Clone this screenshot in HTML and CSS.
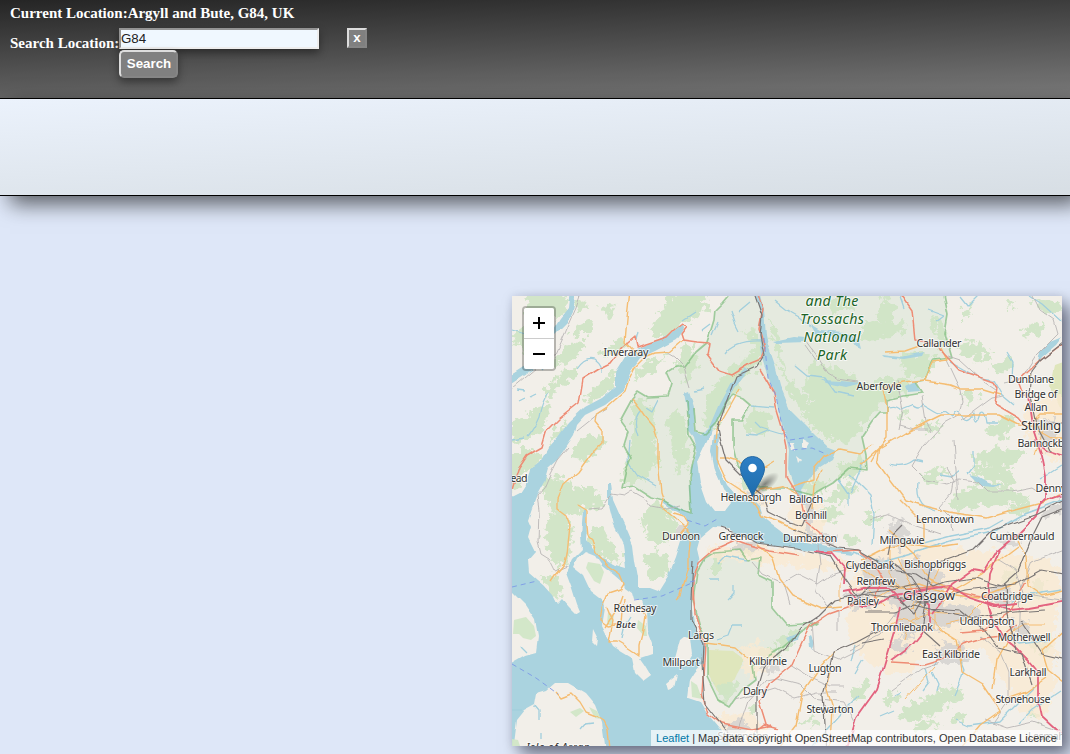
FILE: index.html
```html
<!DOCTYPE html>
<html lang="en">
<head>
<meta charset="utf-8">
<title>Location search</title>
<link rel="stylesheet" href="styles.css">
</head>
<body>
<header class="topbar">
  <div class="current">Current Location:Argyll and Bute, G84, UK</div>
  <form class="search">
    <label class="search-label" for="q">Search Location:</label>
    <div class="search-fields">
      <input class="search-input" id="q" type="text" value="G84">
      <button class="search-button" type="button">Search</button>
    </div>
    <button class="close-button" type="button">x</button>
  </form>
</header>
<section class="panel"></section>
<main class="content">
<div class="map">
<svg class="tiles" viewBox="512 296 550 450" width="550" height="450">
<defs>
  <filter id="rough" filterUnits="userSpaceOnUse" x="500" y="286" width="574" height="470"><feTurbulence type="fractalNoise" baseFrequency=".14" numOctaves="3" seed="4"/><feDisplacementMap in="SourceGraphic" scale="18" xChannelSelector="R" yChannelSelector="G"/></filter>
  <filter id="wobble" filterUnits="userSpaceOnUse" x="500" y="286" width="574" height="470"><feTurbulence type="fractalNoise" baseFrequency=".07" numOctaves="1" seed="9"/><feDisplacementMap in="SourceGraphic" scale="6" xChannelSelector="R" yChannelSelector="G"/></filter>
  <radialGradient id="pin"><stop offset="0" stop-color="#000" stop-opacity=".45"/><stop offset="1" stop-color="#000" stop-opacity="0"/></radialGradient>
  <linearGradient id="blue" x2="0" y2="1"><stop offset="0" stop-color="#2e7fc6"/><stop offset="1" stop-color="#1f6dab"/></linearGradient>
</defs>
<rect class="land" x="512" y="296" width="550" height="450"/>

<!-- national and regional parks -->
<g class="park" filter="url(#wobble)">
  <path d="M733 290L722 303 715 310 714 320 710 333 707 342 698 346 695 352 684 367 675 367 667 372 672 383 668 397 648 398 638 392 632 399 620 421 628 432 624 445 631 458 626 470 622 488 635 486 652 497 663 500 674 507 691 513 689 490 688 478 692 462 698 448 715 428 726 402 733 395 743 399 750 405 741 420 733 420 733 448 737 465 760 488 785 488 812 495 833 483 850 468 867 470 866 455 862 437 872 422 880 413 887 413 887 400 903 396 922 393 915 382 925 380 933 360 952 358 945 333 948 315 943 290Z"/>
  <path d="M715 552L740 550 747 560 760 558 758 575 772 582 772 607 787 625 817 623 800 633 782 648 770 655 753 667 755 680 742 690 730 707 718 700 707 677 707 640 700 627 693 600 697 572 705 558Z"/>
  <path class="moor" d="M708 650l25 1 12 9-8 14-9 20-9-1-12-20z"/>
  <path class="moor" d="M1068 360l-14 5-4 20 12 26h6z"/>
</g>

<!-- woodland -->
<g class="wood" filter="url(#rough)">
  <path d="M530 292h32l8 14-14 16-22 4-10-16zM508 340l22-20 12 4-20 22zM577 325l14-6 6 8-16 10-10-2zM578 300l10 2-4 10-10 0zM650 330l22-38 32-2 4 18-30 22-22 10zM598 352l24-14 4 8-20 14zM566 345l20-4-8 16-20 10-8-4zM545 388l20-20 14-2-12 18-22 16zM508 425l24-14 22-8-12 26-28 16zM588 394l20-18 12-10-6 20-22 16-10-2zM632 372l18-12 16-4-10 16-20 8zM508 450h26l8 8-8 10-10 4-4 14-12 6zM556 428l10-8-6 16-12 12zM580 440l18-6 10 8-12 12-10 6-16-2z"/>
  <path d="M540 480l22-4 14 10 14 14-12 16-24-4-10-16zM548 512l20 2 4 20-4 24-8 12-12-20-4-18zM582 488l10 0 14 12-4 10-20-4zM588 528l12-2 14 18 8 20-20-6-14-16zM584 560l12 12 8 18-12-4-8-14zM640 520l16-22 14 14 6 20-18 16-12-14zM644 555l12-6 14 10-6 18-16 6zM640 622l10 8 2 16-8 0zM540 576l18-2 4 14-4 12-10-8zM620 484l16-60 14 2 10 34-20 22z"/>
  <path d="M632 404l12-6 8 14 4 30-12 18-12-20zM668 416l12-6 8 18-2 38-8 10-6-30zM685 338l14 22-12 22-10-14zM706 396l26-32 20-6-14 32-26 40-8-4zM745 330l14 2 4 22-8 20-16-8 14-18zM768 316l12 22 4 30 16 24 14 12 24 2 22 12-6 18-14 8-28-14-20-34-18-48zM812 362l30 6 22 16 22-8 28 6-8 12-24 8-30 38-20-6-10-22-20-24zM882 298l14 6-6 18-14-2zM824 300l22-4 6 14-18 4zM932 318l12 4 6 24-12 2zM862 326l26-6 20 4-16 14-30 2zM900 354l40 2-12 20-22 2zM738 476l14 0 10 12-20 0zM797 480l14-6-2 20-12-4zM742 420l16-12 12 8-4 20-16-4zM836 468l24-10 4 10-18 14zM806 486l22-6-6 14-14 4z"/>
  <path d="M961 312l12-8-4 14-8 2zM956 344l20-2 18 10-12 10-22-8zM990 366l20-10 4 10-16 8zM960 394l12-4 6 8-10 6zM1020 330l22-8 4 8-18 8zM1032 300l26 2 4 8-16 4zM920 420l20 4-2 10-16-2zM900 410l10 4-8 8zM985 430l20-14 14 0-10 16-14 8zM970 455l28-8 24 6-10 14-32-2zM972 468l26-4 16 14-4 10-22-6zM950 500l24-16 34 4 26 10-20 6-30 2-26 6zM922 474l14-6 12 4-18 14zM1006 508l24-8 4 10-18 6zM1030 582l16 0-4 14-10 0zM1030 640l22 4-4 8-14 0zM1000 572l14-4 6 10-16 4zM830 490l24-8 4 8-18 12-16 0zM818 512l16-6 12 8-12 8-20-2zM866 512l16 4-4 8-16 0zM845 538l10-4 2 12-8 2z"/>
  <path d="M898 716l16-14 20-6 14 6-14 12-24 8zM935 694l18-8 10 10-16 12zM954 712l14 2-6 10-12-4zM882 698l12-6 6 6-12 8zM912 724l20-4 8 6-24 6zM1030 706l8 2-4 12-6-4zM852 690l8-6 10-2-6 16-10 2zM800 720l18-4-4 8-14 2zM745 706l14 2-10 8zM715 554l12 4-8 14-12 0zM780 638l20-8-12 20-12 10zM716 682l22 2-8 18-10-4zM760 650l16-10-4 16-14 6zM740 544l16 2-4 10-16 0zM1006 300l10 4-8 8zM520 346l8-6 8 6-10 8zM600 304l16 4-8 8z"/>
</g>

<!-- built-up areas -->
<g class="suburb" filter="url(#rough)">
  <path d="M868 558l24-14 36-2 40 8 40 2 44 10 10 20-6 40 0 60-10 32-20 4-22-34-20-36-60 10-20 20-32-12-26-30 4-54zM706 546l34-4 30 6 50 8 44 8-10 8-70-6-40-8-30 4zM1025 400l43-4v70l-40-20zM730 484l26 6 14 18-16-4zM790 505l30-4 6 40-30 6zM740 650l16-10 20 14-10 18-18 6zM714 716l40-4 12 20-4 14h-34z"/>
</g>
<g class="town" filter="url(#rough)">
  <path d="M862 564l20-8 14 10 2 22-12 10-22-4zM896 566l22-10 16 10 14 18-8 20-22 18-20-2-8-20zM900 604l30-2 26 6 14 12-22 8-26-2-12 14-14-8zM888 524l12-6 8 16-4 18-10-4zM945 604l24-2 14 14-16 10-20-8zM846 594l20-2 4 16-18 4zM990 590l14-4 12 8-10 12-16-4zM1012 620l20 4-4 14-18-4zM934 646l30-4 4 18-24 6zM726 545l26-3 10 8-24 2zM806 532l24 0 8 10-24 2zM803 502l10 0-2 34-6 0zM1036 420l16 0 6 20-14 10zM996 538l20-4 8 8-22 6zM888 644l14-6 10 12-12 6zM722 724l22-4 10 12-20 6zM676 522l12 4-8 16-6-4zM740 488l14 6 6 8-10-4zM765 660l20 2-8 12-12-4zM1040 508l28-8v10l-24 10z"/>
</g>

<!-- sea and lochs -->
<g class="water" filter="url(#wobble)">
  <path d="M506 500L520 493 527 482 530 470 540 462 548 448 558 437 568 423 585 407 602 398 615 387 615 373 625 357 638 348 655 341 672 333 683 323 684 328 676 340 655 351 640 358 631 371 623 391 605 405 585 415 577 424 574 435 564 450 557 460 548 468 544 482 537 495 532 508 528 520 531 527 528 538 535 552 528 560 529 573 537 580 543 585 552 595 557 605 562 600 568 607 575 614 580 611 577 604 572 588 566 572 572 559 582 549 581 535 583 510 586 510 587 525 586 540 593 548 600 556 612 564 626 568 623 545 613 525 608 505 608 484 611 484 613 500 622 520 628 533 633 545 635 562 638 578 638 588 650 588 658 591 668 575 675 558 680 542 688 525 684 516 673 510 663 503 663 500 674 505 691 513 689 490 690 470 697 450 694 438 688 430 688 415 684 393 689 391 694 407 695 432 700 435 710 425 719 404 731 382 745 368 748 370 734 388 727 403 714 425 704 447 697 462 700 482 707 502 714 511 725 511 732 502 724 490 715 470 711 450 713 435 719 433 718 465 727 485 736 495 752 500 759 507 762 517 772 525 784 534 795 540 817 544 837 548 853 553 852 555 820 551 790 547 757 543 741 535 730 528 713 527 700 538 697 549 700 562 695 571 692 585 692 610 695 630 705 643 703 663 695 672 690 680 688 698 700 702 706 712 715 723 725 735 735 752 506 752Z"/>
  <path d="M570 290L576 290 573 312 568 322 555 335 532 370 508 386 508 377 528 364 550 334 560 318 568 308Z"/>
  <path d="M754 290L759 290 764 310 766 335 768 345 775 365 780 385 790 410 805 425 815 435 827 446 837 450 833 460 820 468 808 478 801 490 807 505 804 506 795 490 788 470 789 450 783 425 777 400 770 382 764 365 761 355 759 335 761 315Z"/>
  <path d="M773 341l20-4 14 1 0 4-30 1zM810 324l10 6 24 2 16 8 2 8-14-6-20-6-12-2zM882 355l18 2 24-5-2 4-18 3-20-2zM905 387l10-5 4 9-12 1zM822 380l20 1 20 2-16 4-20-4zM970 474l8 2 14 8 10 0-8 3-12-1zM1040 352l10-10 12-5-6 8-14 12-5 10zM808 638l3-2 3 7-2 6-3-2zM786 638l14-6-3 8-8 3z"/>
</g>
<g class="land" filter="url(#wobble)">
  <path d="M506 586L525 605 535 620 538 637 536 653 525 656 506 667Z"/>
  <path d="M512 752L516 720 524 710 535 704 537 693 547 690 555 683 568 683 585 693 595 705 602 723 606 752Z"/>
  <path d="M585 551L595 555 602 565 615 575 623 582 625 588 632 593 634 600 642 600 646 610 647 630 652 643 652 654 640 658 645 665 651 675 643 681 635 673 632 658 622 652 613 646 608 637 602 625 605 607 603 600 590 590 583 575 573 567 577 558Z"/>
  <path d="M674 662L680 640 685 636 691 637 693 655 685 668ZM666 683l10-8-3 13-5 2zM593 629l5 10-1 7-5-5zM789 442l5 0 2 8-5 0zM803 440l7 4-3 5-4-2zM796 456l5 4-3 4z"/>
</g>
<g class="wood">
  <path d="M514 620l12-3 8 9 2 10-5 4-8-2-4-4-6 0zM588 562l12 2 4 8-4 12-6-3-8-13zM638 620l8 6 1 10-3 0-7-8zM570 712l10-4 4 3-8 6zM589 707l8 4 4 8-6-1zM512 739l6 1 2 6h-8zM608 612l6 4-3 10-4-2zM691 681l6 4 5 14-10-2z"/>
</g>

<!-- streams and small water -->
<g class="stream" filter="url(#wobble)">
  <path d="M527 437q8-10 12-20 2-14 10-26M512 440l12-2M577 368q8-12 18-9 8 6 7 14M518 390l8 1M520 402l6-3M530 396l6-3M542 370l3-4M527 320l-3 6M512 330l20 6M636 340l2-8M683 320l12-8"/>
  <path d="M630 440l-2 22 8 12 20 12M640 410q-8 10-2 26M658 400l-6 12-6-4M702 330l8-6M704 388l-10 2M731 311l4 12 4 8M750 302l-12 10M725 354q10-14 36-13M718 322l-6 14M775 301l10 8 14 8 12 10M795 366l12 10 18 2 10 14 18 4M755 422l6 6 20 6 5-2M746 435l10 1 14-6M752 406l22 2M900 296l4 12M928 310l16 6-8 6M1007 352l6 10-1 16M960 296l8 10 10-10M1030 296l12 8 20 18M950 362l14 8 16 8 14 2 8 14 12 10"/>
  <path d="M886 407q10-4 16 2l10-4q8 8 12 0l10 6q6 4 10 0l8 6q4-12 10-2t12-2q2 16 6 0 4-4 6 10l12 0M890 464q14 4 24-4l10 2M918 481q-2 20 8 26l10 4M974 452l0 14-6 8M960 470l-8 6-12-2M1040 480l22-14M900 540l20 4 30-8 40-8 14-8M864 460l-8 20-6 14M850 475l20 20 4 20-2 30M838 480l10 14 0 12M718 564l8-8 20 4M728 600l6-6 0-8M716 640l12-4 4-10 10 0M710 580l10 0M925 668l4 14-6 8M932 672l6 12-2 8M960 660l4 10-4 12-6 14M940 655l-6 10M895 696l6-3M955 720l14 6 30-4 18-18 20-20M1050 640l-30 4-12-8M1062 690l-30 20-14 14M812 746l16-18 20-22 10-10M855 645l-4 16M863 660l-8 14M1062 590l-40 6-16 10M880 716l14-6M535 705l5 6 0 10M541 733l0 6M580 730l6-7 8-1M622 638l3-13 5-8M512 710l10 0M520 646l6 6"/>
</g>
<path class="canal" filter="url(#wobble)" d="M903 556l20-6 30-10 40-8 32-18 37-14M852 552l30 10 22-6"/>

<g class="boundary" filter="url(#wobble)">
  <path d="M733 290L722 303 715 310 714 320 710 333 707 342 695 352 684 367 675 367 667 372 672 383 668 397 648 398 638 392 632 399 620 421 628 432 624 445 631 458 626 470 622 488 635 486 652 497 663 500 674 507 691 513 689 478 692 462 696 448 689 436 687 400"/>
  <path d="M694 408L696 432 704 434 716 422 726 402 733 395 743 399 750 405 741 420 733 420 733 448 737 465 760 488 785 488 812 495 833 483 850 468 867 470 866 455 862 437 872 422 880 413 887 413 887 400 903 396 922 393 915 382 925 380 933 360 952 358 945 333 948 315 943 290"/>
  <path d="M715 552L740 550 747 560 760 558 758 575 772 582 772 607 787 625 817 623 800 633 782 648 770 655 753 667 755 680 742 690 730 707 718 700 707 677 707 640 700 627 693 600 697 572 705 558Z"/>
</g>

<!-- roads and railways -->
<g class="minor" filter="url(#wobble)">
  <path d="M568 447l-11 13-7 14-6 14-7 8 2 14-1 32 3 12 8 5 6 12 12-5M589 510l12-1 7-11 4-4 12 2 8-5 14 8 6 8 10 2 18-4M664 351l10 6 10 10 6 20M577 430l10-8 10-8 10-6M512 388l24-20 20-14 20-46 6-18M806 341l12 16 10 16 10 6 20 3M806 346l10 14M948 356l12 4 24 22 12 8M946 360l14 30 2 12-4 14-14 8-20 22-12 20 14 14 22 4 10-4 20 2 10 10 24 0 20-4 6 4M900 425l14 4 14 0M962 420l30-22 12-2M1030 290l10 20 14 10 4 14-10 10-12 12-14 22-18 4M922 396l4 26 6 10M946 467l8 14-2 12-12 14 10 10 2 14M752 562l10 12 22 10 6 20M784 582l14-8 20 10 14-10 30-10M818 545l2 20-4 26 10 14 12 6 0 20M812 620l2 30 24 10 24-12 14-22M790 664l22 14 18 8 14 0M735 700l40-12 20 10 22-6 20 0M738 730l10-30 18-20 10-2 24 6 14 14 30 4 10 20M850 650l30-16 20-26M892 690l30-22 18-6M980 636l20 16 8 20 0 30-14 20M1068 548l-36 14-12 30-2 50M1000 560l16 10 10 30M985 720l22 8 26-6 29 10M958 500l-4-60M897 380l6 30-4 20M870 520l20-6 20 10 30 10M1062 600l-30-4-20 10"/>
</g>
<g class="primary" filter="url(#wobble)">
  <path d="M630 290l-3 28-2 24 7 8 8 4M683 340l-14 12-14 1-10 4-10 10-6 12-4 12-18 16-12 8-1 6 8 10 0 12-8 8-6 8-10 14-14 12-6 14 0 10 8 6 4 10-3 30-2 8-10 12-4 6M577 505l10 6 0 15 1 10 4 4 4 12 12 14 12 8 4 10-4 6-12 4-6 14-2 12 8 6 14-2 2-26M632 399l8 10 4 6 10 12 4 12 0 20 3 34 2 6-2 8 10 8 12 10 8 8-2 20 0 14-6 20-2 10-4 4M673 513l10 3 5 8-8 10M715 443l1-12 14-24 10-18M717 445l0 14 10 22 20 13 14 22 18 6 16 8M885 353l20-1 20-7M941 348l6 12-14 2-8 18-22 2-20 6 4 20 0 30-8 10-8 14M925 381l26 4 10 4 20 0 20 6M861 465l20-18 24-14 36-18 28 0 30 0 20 10 20 2M879 446l-2 16 10 14 18 24 20 6 24 6 38 6 28-8 30-8 34-18M790 487l24-8 0-10 10-12 16-8 20 4 12-8M812 510l2-24 8-16M720 458l8 0 18 6 12 8 16-10M748 500l12-10 22-4 14 8M705 643l16 2 14 2 14 12M757 544l16 14 6 20 14 18 28 12 20-2M776 752l20-26 6-32 18-26 14-16M830 672l-4 14 6 20-2 40M862 560l24-12 20-4 24 4 28-4M888 530l26 24 16 26 24 10 24-14 24-18 16-12M900 500l24 24 0 20M864 570l14 10 20 8 20-4 30 10 30 4 40-16M940 630l16 10 4 18 2 14 20 12 12 18 6 10-20 14-20 24M1004 700l22-8 20-14M993 690l4-30 12-22 6-10M1018 540l8 16 2 30 14 10 26-6M1030 424l10-10 28 0M1037 430l14 8 17 0M556 691l6 7 10-4 8 8 6 10 10 4 8 5 4 8 2 20M1068 626l-26 24 6 20 20 16M622 595l-5 14-8 12-4 6M607 607l6 14-4 20 8 0 10 6 12 8 0-10 4-16 2-14-6-10"/>
</g>
<g class="primary thin" filter="url(#wobble)">
  <path d="M898 558l14 30 4 30M880 578l30 14 20 20 30 2M905 640l6-20 30-10M870 602l20-12 30-2M880 630l20-10 18 4M940 566l-10 24-20 20M955 590l-20 20 0 20M890 550l0 24 12 16M925 610l20 24M985 600l-20 20-20 4M1000 640l24-16 20 0M870 590l14 16M1035 455l10-30M905 700l30-34M850 562l-10 20 0 20"/>
</g>
<g class="trunk" filter="url(#wobble)">
  <path d="M697 342l-14-2-2-6 6-8-4-3-8 6-8 8-30 10-2-10-12 10-12 16-12 6-16 10-4 24-20 16-14 14-4 14-14 8-8 12-8 26-18 0M697 342l12 1-2 12 12 16 12 4 20-12 10-4 4-10-6-20 4-20-9-28M760 369l14 24 2 14 6 20 4 20 0 30 6 10 10 14 4 20M898 290l14 20 3 30 20 4 24 26 34 12 4 6-2 16 24 14 8 10M1068 340l-26 19-24 22 6 16M806 522l12 10 10 12M693 600l0-20 6-18 14-12 22-10 12 4 22 6 30 5M693 590l2 24 10 30-3 50 6 20 14 10 30 6 20-4M768 728l-8-26 10-20 22-18 10-22 8-16 18-12 34-12M890 662l34 2 20-6 18-14 20-6 20-2 14-12M960 632l24-2 26-18 16-30M754 733l10-8 14 4M827 552l30-2 14 10 12 20-10 24M905 590l30-4 40 10 30 4"/>
</g>
<g class="motorway" filter="url(#wobble)">
  <path d="M1027 392l4 20 3 20 8 24 4 20 0 22-6 6-4 12-16 16-24 20-12 20-12-2-20 14-12 20-8 10M1034 440l12 10 22 7M1040 502l28-9M815 551l18 3 12 14-1 16M844 592l20-4 24 0 14 14 18-12 30-4 20 12 24 8 24-2M1000 550l-10 24-2 30 4 14 10 18 14 12 12 12 10 12 0 26 4 18 26 24M850 592l12 14 12 0 18-10 20-2 20-6M900 606l-4 20-12 40-8 24-20 28-10 34M915 590l14 14 0 20-16 20-22 16M985 602l24 8 20-2 39-7M988 604l6 16"/>
</g>
<g class="rail" filter="url(#wobble)">
  <path d="M753 290l9 26-2 20 4 20-6 10-22 10-6 16-8 22-4 14 2 10 6 22 26 26 10 8 6 18 20 10 14 4 14-32M792 530l24 8 22 10 20 2 20 12M721 527l18 6 18 10 40 5 34 8 12 20 14 20 8 6M693 560l-2 40 0 20 12 24-1 20 3 40 22 28M757 740l0-52 6-20 24-20 14-20 18-12 16-16 26-6 30-4 24-6M829 672l-6 22 4 58M829 672l4-20 24-10 26-14M1068 339l-28 22-8 10-2 24 6 30 14 26M876 560l16 10 24 4 18 12 10-4 30-4 28 8 16-14 12-30 12-24 26-10M940 562l34-12 20-20 44-16 30-16M900 600l14 14 12-20 4-26M865 612l30 0 20-8 30 8 30 6 20-4 20-2 30-2M926 600l-4 30 18 16M930 608l30 2 24 20 14 18 24 6 10 30M1005 585l2 30 10 36M1020 620l22 34 26 6M850 606l24-24 30 6 22 12M890 560l20 16 16 24M865 594l60 8 40-12 50-6 26-14 27 5M888 555l4-20 10-10M1044 423l20 0M862 643l22-4"/>
</g>
<g class="ferry">
  <path d="M512 587l25-6M512 664l24 14 22 16M634 600l28-4 32-14M687 520l18 6 14-8M690 582l8-2M764 338l4 40 8 18 6 30 10 24 20-2 14 6M790 440l26-4"/>
</g>

<!-- place names -->
<g class="names">
  <text x="626" y="356" textLength="45">Inveraray</text>
  <text x="939" y="347" textLength="45">Callander</text>
  <text x="879" y="390" textLength="45">Aberfoyle</text>
  <text x="1031" y="383" textLength="46">Dunblane</text>
  <text x="1036" y="398" textLength="43">Bridge of</text>
  <text x="1036" y="411" textLength="23">Allan</text>
  <text x="1049" y="447" textLength="63">Bannockburn</text>
  <text x="1051" y="492" textLength="31">Denny</text>
  <text x="519" y="482" textLength="17">ead</text>
  <text x="751" y="501" textLength="61">Helensburgh</text>
  <text x="806" y="503" textLength="34">Balloch</text>
  <text x="811" y="519" textLength="32">Bonhill</text>
  <text x="681" y="540" textLength="38">Dunoon</text>
  <text x="741" y="540" textLength="45">Greenock</text>
  <text x="810" y="542" textLength="54">Dumbarton</text>
  <text x="945" y="523" textLength="58">Lennoxtown</text>
  <text x="902" y="544" textLength="45">Milngavie</text>
  <text x="1022" y="540" textLength="65">Cumbernauld</text>
  <text x="870" y="569" textLength="49">Clydebank</text>
  <text x="935" y="568" textLength="62">Bishopbriggs</text>
  <text x="876" y="585" textLength="39">Renfrew</text>
  <text x="863" y="605" textLength="32">Paisley</text>
  <text x="1007" y="600" textLength="52">Coatbridge</text>
  <text x="987" y="625" textLength="55">Uddingston</text>
  <text x="902" y="631" textLength="62">Thornliebank</text>
  <text x="1024" y="641" textLength="53">Motherwell</text>
  <text x="951" y="658" textLength="58">East Kilbride</text>
  <text x="1028" y="676" textLength="37">Larkhall</text>
  <text x="1023" y="703" textLength="55">Stonehouse</text>
  <text x="635" y="612" textLength="43">Rothesay</text>
  <text x="701" y="639" textLength="26">Largs</text>
  <text x="681" y="666" textLength="37">Millport</text>
  <text x="768" y="665" textLength="38">Kilbirnie</text>
  <text x="755" y="695" textLength="24">Dalry</text>
  <text x="825" y="672" textLength="33">Lugton</text>
  <text x="830" y="713" textLength="47">Stewarton</text>
  <text x="743" y="740" textLength="51">Stevenston</text>
  <text x="1059" y="740" textLength="62">Lesmahagow</text>
  <g class="island">
    <text x="626" y="628" textLength="20">Bute</text>
    <text x="558" y="750" textLength="63">Isle of Arran</text>
  </g>
  <g class="city">
    <text x="929" y="600" textLength="52">Glasgow</text>
    <text x="1041" y="430" textLength="40">Stirling</text>
  </g>
  <g class="park-name">
    <text x="832" y="306" textLength="53">and The</text>
    <text x="832" y="324" textLength="64">Trossachs</text>
    <text x="832" y="342" textLength="57">National</text>
    <text x="832" y="360" textLength="30">Park</text>
  </g>
</g>

<!-- marker -->
<ellipse cx="765" cy="484" rx="17" ry="7" fill="url(#pin)" transform="rotate(-38 765 484)"/>
<path d="M752.500 496.500C750 488 740.500 477 740.500 468.500A12 12 0 0 1 764.500 468.500C764.500 477 755 488 752.500 496.500Z" fill="url(#blue)" stroke="#2469a3"/>
<circle cx="752.500" cy="468" r="4.300" fill="#fff"/>
</svg>
<div class="zoom">
  <a class="zoom-button"><svg width="12" height="12" viewBox="0 0 12 12"><path d="M6 0v12M0 6h12" stroke="#000" stroke-width="2"/></svg></a>
  <a class="zoom-button"><svg width="12" height="12" viewBox="0 0 12 12"><path d="M0 6h12" stroke="#000" stroke-width="2"/></svg></a>
</div>
<div class="attribution"><a class="attribution-link">Leaflet</a> | Map data copyright OpenStreetMap contributors, Open Database Licence</div>
</div>
</main>
</body>
</html>
```

FILE: styles.css
```css
* { box-sizing: border-box; }
body {
  margin: 0;
  height: 754px;
  overflow: hidden;
  background: #dee7f8;
  font-family: "Liberation Serif", serif;
}
.topbar {
  height: 99px;
  padding: 5px 10px;
  border-bottom: 1px solid #000;
  background: linear-gradient(178deg, #252525, #7a7a7a);
  color: #fff;
  font-size: 15px;
  font-weight: bold;
}
.current { height: 23px; line-height: 17px; }
.search { display: flex; align-items: flex-start; margin: 0; }
.search-label { width: 109px; padding-top: 7px; line-height: 17px; white-space: nowrap; }
.search-fields { display: flex; flex-direction: column; align-items: flex-start; gap: 1px; }
.search-input {
  width: 200px;
  height: 21px;
  padding: 0 0 1px;
  border: 2px solid;
  border-color: #949494 #eee #eee #949494;
  background: #f0f8ff;
  color: #222;
  font: 13.333px "Liberation Sans", sans-serif;
  box-shadow: 0 4px 8px rgba(0, 0, 0, .4);
}
.search-button {
  width: 59px;
  height: 28px;
  padding: 0 0 1px 1px;
  border: 2px solid;
  border-color: #ddd #858585 #858585 #ddd;
  border-radius: 5px;
  background: #808080;
  color: #fff;
  font: bold 13.333px "Liberation Sans", sans-serif;
  box-shadow: 0 4px 8px rgba(0, 0, 0, .4);
}
.close-button {
  width: 20px;
  height: 20px;
  margin-left: 28px;
  padding: 0;
  border: 2px solid;
  border-color: #ddd #858585 #858585 #ddd;
  background: #808080;
  color: #fff;
  font: bold 13.333px/16px "Liberation Sans", sans-serif;
}
.panel {
  height: 97px;
  border-bottom: 1px solid #000;
  background: linear-gradient(177deg, #ebf2fc, #d7dee4);
  box-shadow: 10px 8px 20px rgba(0, 0, 0, .6);
}
.content { display: flex; justify-content: flex-end; padding: 100px 8px 0 0; }
.map {
  position: relative;
  width: 550px;
  height: 450px;
  box-shadow: 8px 9px 16px rgba(0, 0, 20, .5), 0 0 8px rgba(0, 0, 60, .1);
}
.tiles { display: block; }
.land { fill: #f2efe9; }
.park { fill: #e5eadf; }
.moor { fill: #dfe6bc; }
.wood { fill: #cfe5c5; opacity: .9; }
.suburb { fill: #fbead2; opacity: .75; }
.town { fill: #d5d3d1; opacity: .85; }
.water { fill: #aad3df; }
.stream, .canal, .boundary, .minor, .primary, .trunk, .motorway, .rail, .ferry {
  fill: none;
  stroke-linejoin: round;
}
.stream { stroke: #a2cfdd; stroke-width: 1.3; }
.canal { stroke: #a2cfdd; stroke-width: 1.6; }
.boundary { stroke: #77b977; stroke-width: 1.7; opacity: .65; }
.minor { stroke: #b9b6b5; stroke-width: .9; }
.primary { stroke: #f5bd72; stroke-width: 1.4; }
.thin { stroke-width: 1; }
.trunk { stroke: #ee8c74; stroke-width: 1.5; }
.motorway { stroke: #e3647f; stroke-width: 1.8; }
.rail { stroke: #7b7776; stroke-width: 1.2; }
.ferry { stroke: #7c98e6; stroke-width: .9; stroke-dasharray: 5 4; }
.names {
  font: 10.7px "Noto Sans", sans-serif;
  text-anchor: middle;
  fill: #333;
  stroke: rgba(255, 255, 255, .7);
  stroke-width: 2px;
  stroke-linejoin: round;
  paint-order: stroke;
}
.city { font-size: 12.8px; }
.island { font-size: 9.5px; font-style: italic; font-weight: 500; }
.park-name { font-size: 14.3px; font-style: italic; fill: #1c6427; }
.zoom {
  position: absolute;
  top: 10px;
  left: 10px;
  width: 34px;
  border: 2px solid rgba(0, 0, 0, .25);
  border-radius: 4px;
  background-clip: padding-box;
}
.zoom-button {
  display: flex;
  align-items: center;
  justify-content: center;
  height: 30px;
  background: #fff;
}
.zoom-button:first-child { height: 31px; border-bottom: 1px solid #ccc; border-radius: 2px 2px 0 0; }
.zoom-button:last-child { border-radius: 0 0 2px 2px; }
.attribution {
  position: absolute;
  right: 0;
  bottom: 0;
  height: 16px;
  padding: 0 5px;
  background: rgba(255, 255, 255, .7);
  color: #333;
  font: 11px/16px "Liberation Sans", sans-serif;
  white-space: nowrap;
}
.attribution-link { color: #0078a8; }
```
